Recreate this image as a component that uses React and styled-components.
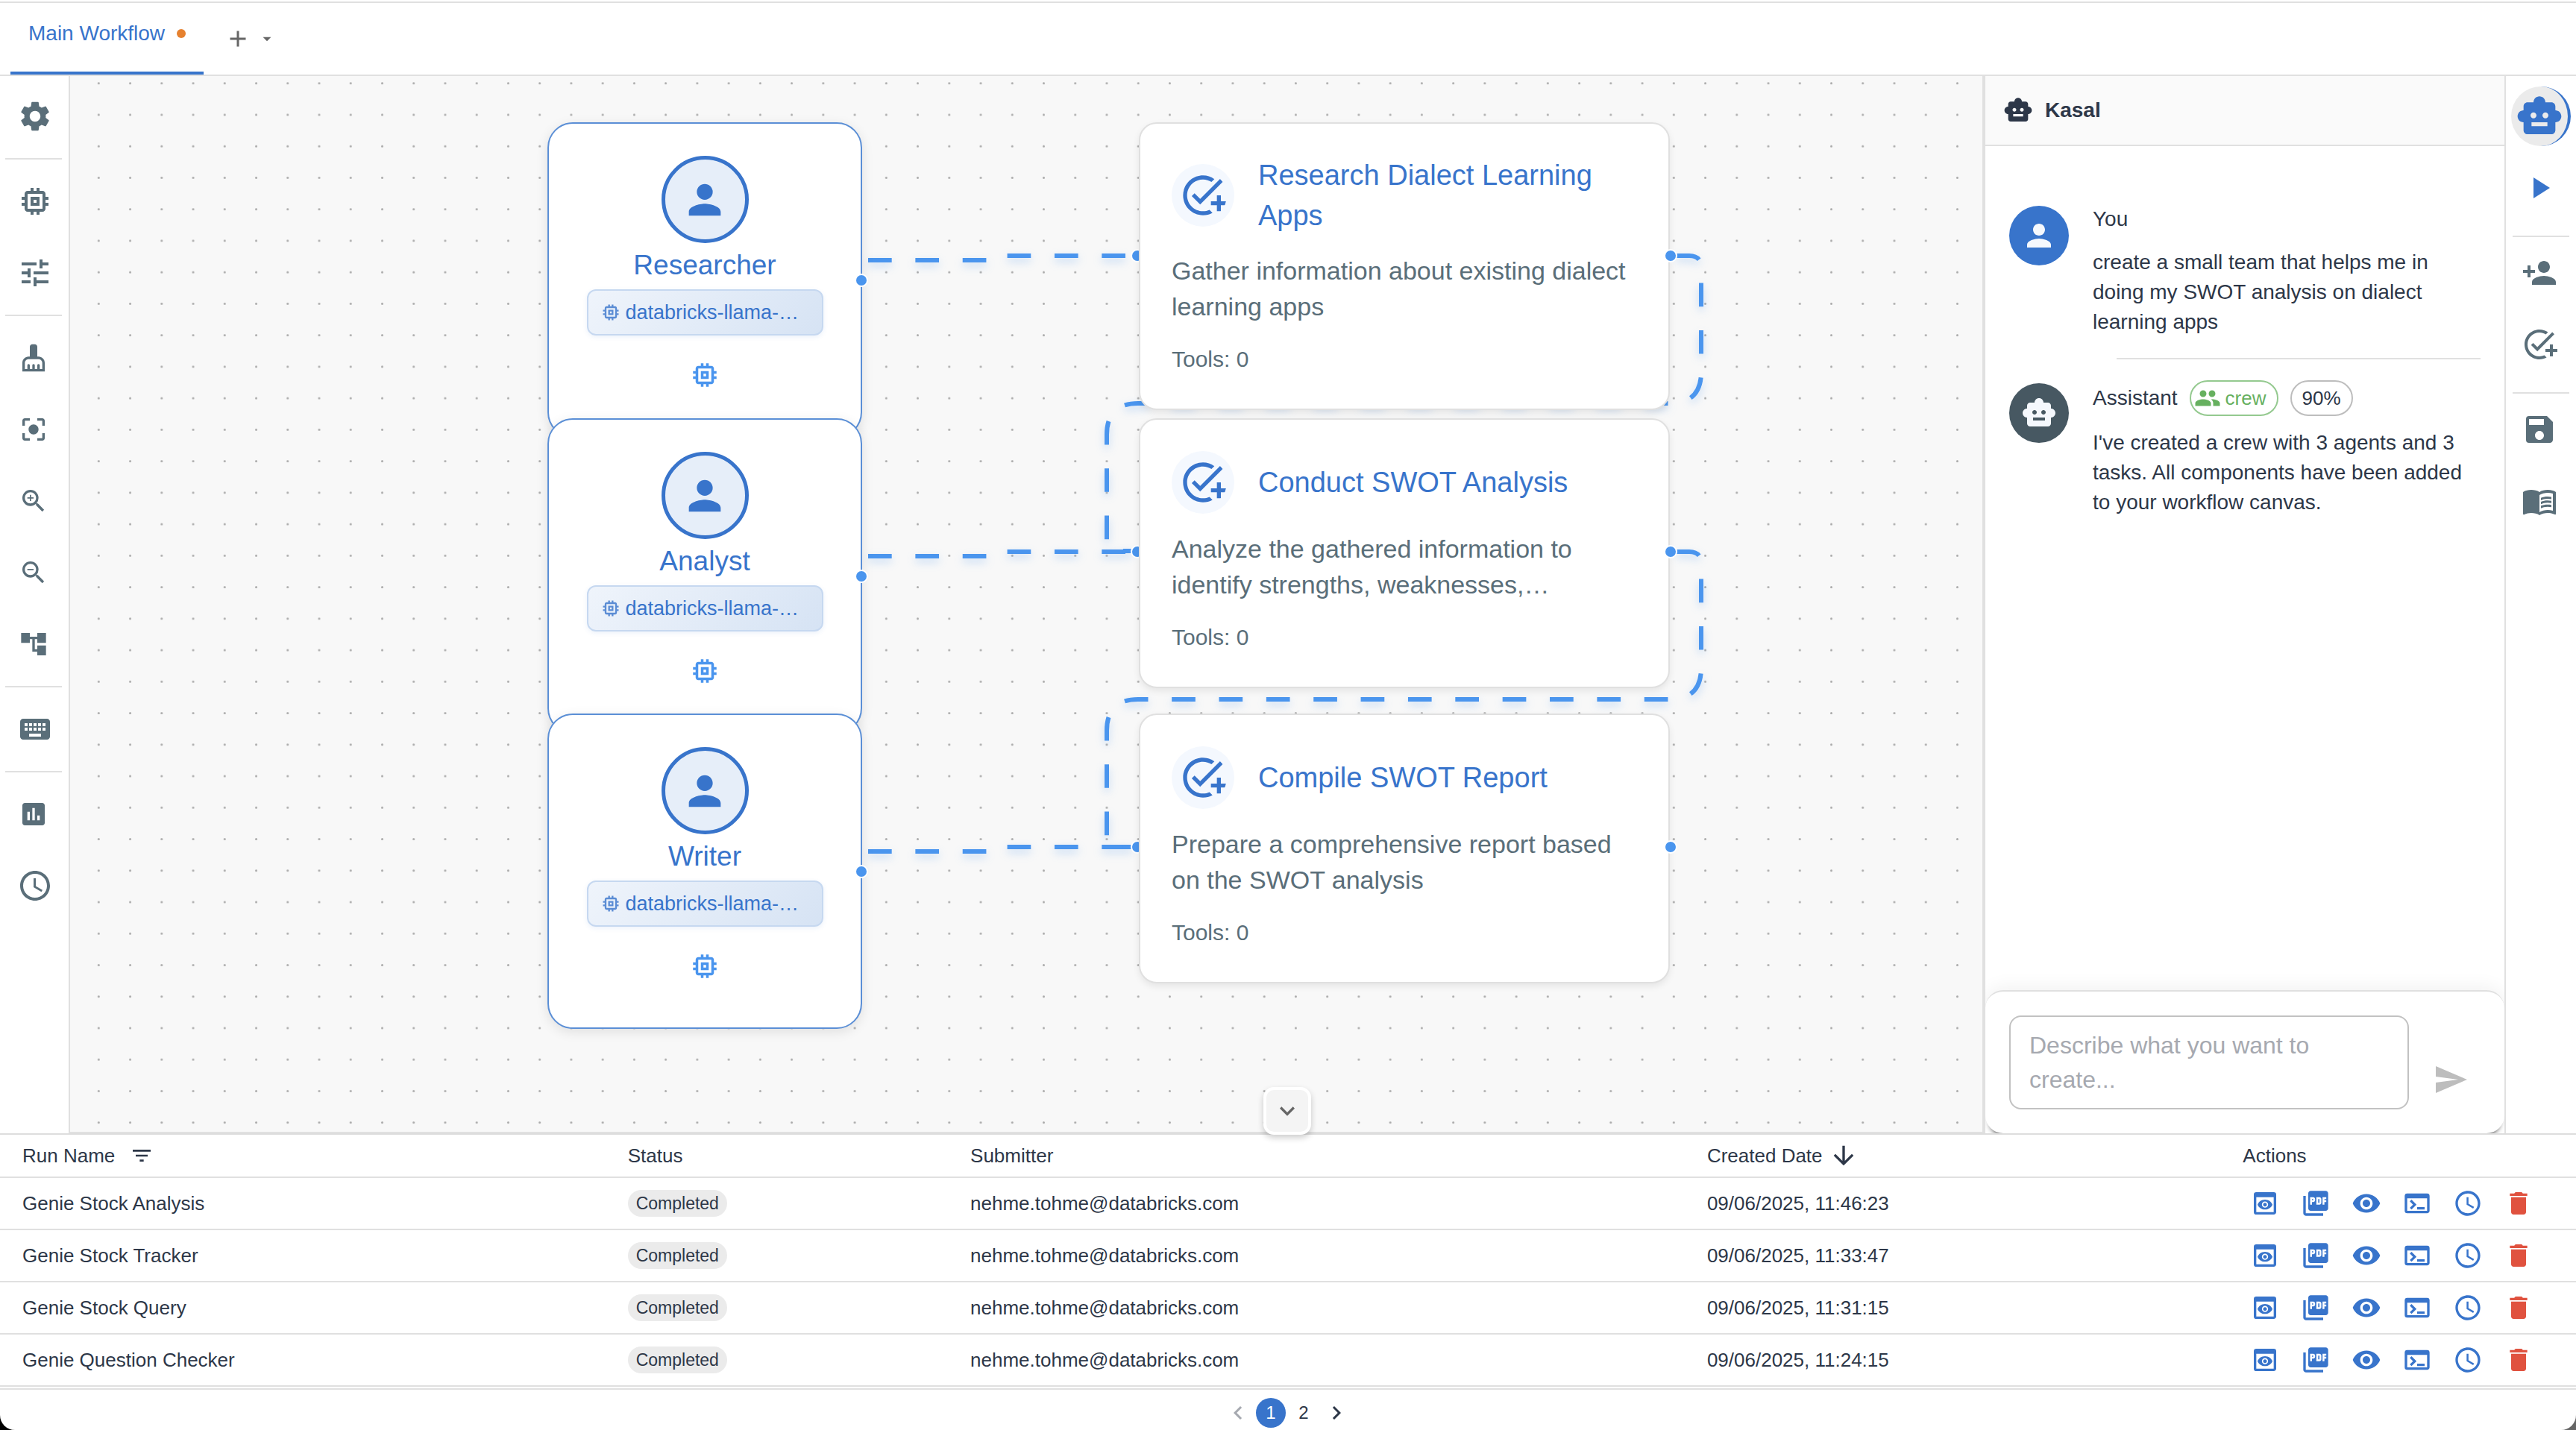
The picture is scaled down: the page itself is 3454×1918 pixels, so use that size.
import React from 'react';
import styled, { createGlobalStyle } from 'styled-components';
import {
  MdAccessTime, MdAccountTree, MdAdd, MdAddTask, MdArrowDownward, MdArrowDropDown,
  MdAssessment, MdCenterFocusStrong, MdCleaningServices, MdDelete, MdFilterList,
  MdGroup, MdKeyboard, MdKeyboardArrowDown, MdMemory, MdMenuBook, MdNavigateBefore,
  MdNavigateNext, MdPerson, MdPersonAdd, MdPictureAsPdf, MdPlayArrow, MdPreview,
  MdSave, MdSend, MdSettings, MdSmartToy, MdTerminal, MdTune, MdVisibility,
  MdZoomIn, MdZoomOut,
} from 'react-icons/md';

const color = {
  primary: '#3874cb',
  bright: '#4a95ee',
  border: '#e0e0e0',
  text: '#2d3748',
  muted: '#5a6e79',
  danger: '#e0523f',
  success: '#66b05f',
};

const GlobalStyle = createGlobalStyle`
  *, *::before, *::after { box-sizing: border-box; }
  body {
    margin: 0;
    background: linear-gradient(90deg, #000, #666);
    color: ${color.text};
    font-family: "Liberation Sans", Arial, Helvetica, sans-serif;
  }
  button {
    padding: 0;
    border: 0;
    background: none;
    color: inherit;
    font: inherit;
    cursor: pointer;
  }
  svg { display: block; flex: none; }
  p, h1, h2, h3 { margin: 0; font-weight: 400; }
`;

const Page = styled.div`
  display: flex;
  flex-direction: column;
  min-height: 100vh;
  padding-top: 2px;
  background: #fff;
  border-radius: 0 0 20px 20px;
  overflow: hidden;
`;

/* ---------- tab bar ---------- */

const TabBar = styled.header`
  display: flex;
  align-items: stretch;
  height: 100px;
  padding-left: 14px;
  border-top: 2px solid ${color.border};
  border-bottom: 2px solid ${color.border};
`;

const Tab = styled.button`
  display: flex;
  align-items: center;
  gap: 16px;
  padding: 0 24px 10px;
  border-bottom: 4px solid ${color.primary};
  color: ${color.primary};
  font-size: 28px;
`;

const UnsavedDot = styled.span`
  width: 12px;
  height: 12px;
  border-radius: 50%;
  background: #e6812f;
`;

const TabTools = styled.div`
  display: flex;
  align-items: center;
  gap: 8px;
  margin-left: 28px;
  color: #666;
`;

/* ---------- workspace ---------- */

const Workspace = styled.div`
  display: flex;
  flex: 1;
`;

const LeftRail = styled.nav`
  display: flex;
  flex-direction: column;
  gap: 16px;
  width: 94px;
  padding: 14px 9px 0 7px;
  border-right: 2px solid ${color.border};
`;

const RightRail = styled(LeftRail)`
  padding: 14px 7px 0;
  border-right: 0;
`;

const RailButton = styled.button`
  display: flex;
  align-items: center;
  justify-content: center;
  flex: none;
  width: ${(p) => (p.$small ? 76 : 80)}px;
  height: 80px;
  color: ${(p) => (p.$accent ? color.primary : color.muted)};
`;

const RightRailButton = styled(RailButton)`
  border-right: 4px solid ${(p) => (p.$selected ? color.primary : 'transparent')};
  border-radius: 50%;
  background: ${(p) => (p.$selected ? '#ebebeb' : 'none')};
`;

const RailDivider = styled.hr`
  width: 76px;
  height: 2px;
  margin: 0;
  border: 0;
  background: ${color.border};
`;

const RightRailDivider = styled(RailDivider)`
  margin: 8px 2px -8px;
`;

/* ---------- canvas ---------- */

const Canvas = styled.main`
  position: relative;
  flex: 1;
  background: #f8f8f8;
  border-bottom: 2px solid ${color.border};
  overflow: hidden;
`;

const Edges = styled.svg`
  position: absolute;
  inset: 0;
  width: 100%;
  height: 100%;
`;

const Edge = styled.path`
  fill: none;
  stroke: ${color.bright};
  stroke-width: 6;
  stroke-dasharray: 31.68;
`;

const EdgeLayer = styled.g`
  filter: drop-shadow(0 5px 6px rgba(74, 149, 238, 0.3));
`;

const Node = styled.article`
  position: absolute;
  left: ${(p) => p.$x}px;
  top: ${(p) => p.$y}px;
  background: #fff;
`;

const AgentNode = styled(Node)`
  display: flex;
  flex-direction: column;
  align-items: center;
  width: 422px;
  height: 423px;
  padding-top: 43px;
  border: 2px solid #5b8fd6;
  border-radius: 34px;
  box-shadow: 0 4px 16px rgba(0, 0, 0, 0.1);
`;

const AgentAvatar = styled.span`
  display: flex;
  align-items: center;
  justify-content: center;
  width: 117px;
  height: 117px;
  border: 5px solid ${color.primary};
  border-radius: 50%;
  background: #e6eef9;
  color: ${color.primary};
`;

const AgentName = styled.h2`
  margin-top: 7px;
  color: ${color.primary};
  font-size: 37px;
  line-height: 46px;
`;

const ModelBadge = styled.span`
  display: flex;
  align-items: center;
  gap: 6px;
  width: 317px;
  height: 62px;
  margin-top: 9px;
  padding-left: 16px;
  border: 2px solid #c6d8f0;
  border-radius: 12px;
  background: linear-gradient(135deg, #eff4fb, #d6e3f4);
  box-shadow: 0 2px 6px rgba(56, 116, 203, 0.1);
  color: ${color.primary};
  font-size: 27px;
  white-space: nowrap;

  svg { opacity: 0.8; }
`;

const MemoryMark = styled.span`
  margin-top: 32px;
  color: ${color.bright};
`;

const TaskNode = styled(Node)`
  display: flex;
  flex-direction: column;
  gap: 23px;
  width: 712px;
  padding: 42px;
  border: 2px solid ${color.border};
  border-radius: 24px;
  box-shadow: 0 4px 10px rgba(0, 0, 0, 0.08);
`;

const TaskHead = styled.div`
  display: flex;
  align-items: center;
  gap: 32px;
  color: ${color.primary};

  svg {
    width: 84px;
    height: 84px;
    padding: 10px;
    border-radius: 50%;
    background: #f4f8fe;
    overflow: hidden;
  }
`;

const TaskTitle = styled.h2`
  font-size: 38px;
  line-height: 54px;
`;

const TaskText = styled.p`
  color: ${color.muted};
  font-size: 34px;
  line-height: 48px;
`;

const TaskTools = styled(TaskText)`
  font-size: 30px;
`;

const Handle = styled.span`
  position: absolute;
  left: ${(p) => p.$x - 9}px;
  top: ${(p) => p.$y - 9}px;
  width: 18px;
  height: 18px;
  border: 2px solid #fff;
  border-radius: 50%;
  background: ${color.bright};
`;

/* ---------- chat ---------- */

const Chat = styled.aside`
  display: flex;
  flex-direction: column;
  width: 702px;
  border-left: 4px solid ${color.border};
  border-right: 2px solid ${color.border};
`;

const ChatHeader = styled.div`
  display: flex;
  align-items: center;
  gap: 16px;
  height: 94px;
  padding-left: 24px;
  border-bottom: 2px solid ${color.border};
  background: #fafafa;
`;

const ChatTitle = styled.h1`
  font-size: 28px;
  font-weight: 700;
`;

const Messages = styled.div`
  flex: 1;
  padding: 48px 32px 0;
`;

const Message = styled.section`
  display: flex;
  align-items: flex-start;
  gap: 32px;
  padding: 28px 0;
`;

const MessageAvatar = styled.span`
  display: flex;
  align-items: center;
  justify-content: center;
  flex: none;
  width: 80px;
  height: 80px;
  margin-top: 4px;
  border-radius: 50%;
  background: ${(p) => (p.$bot ? '#475862' : color.primary)};
  color: #f5f8fd;
`;

const MessageBody = styled.div`
  display: flex;
  flex-direction: column;
  gap: 16px;
  font-size: 28px;
`;

const MessageHead = styled.div`
  display: flex;
  align-items: center;
  gap: 16px;
  line-height: 44px;
`;

const MessageText = styled.p`
  line-height: 40px;
`;

const MessageDivider = styled.hr`
  height: 2px;
  margin: 0 0 0 144px;
  border: 0;
  background: ${color.border};
`;

const Chip = styled.span`
  display: flex;
  align-items: center;
  gap: 6px;
  height: 48px;
  padding: ${(p) => (p.$icon ? '0 14px 0 4px' : '0 14px')};
  border: 2px solid ${(p) => (p.$icon ? '#94c98f' : '#bdbdbd')};
  border-radius: 24px;
  color: ${(p) => (p.$icon ? color.success : color.text)};
  font-size: 26px;
`;

const Composer = styled.form`
  display: flex;
  align-items: flex-end;
  gap: 16px;
  padding: 32px;
  border-top: 2px solid ${color.border};
  border-radius: 24px;
  background: #fff;
  box-shadow: 0 8px 6px -6px rgba(0, 0, 0, 0.7), 0 -4px 24px rgba(0, 0, 0, 0.06);
  clip-path: inset(-40px 0 0 0);
`;

const Prompt = styled.textarea`
  flex: 1;
  min-width: 0;
  height: 126px;
  padding: 15px 25px;
  border: 2px solid #c2c2c2;
  border-radius: 16px;
  background: #fff;
  color: ${color.text};
  font: 32px/46px "Liberation Sans", Arial, Helvetica, sans-serif;
  resize: none;

  &::placeholder {
    color: #a6a9b0;
    opacity: 1;
  }
`;

const SendButton = styled.button`
  display: flex;
  align-items: center;
  justify-content: center;
  width: 80px;
  height: 80px;
  color: #bdbdbd;
`;

/* ---------- run history ---------- */

const History = styled.section`
  position: relative;
  border-top: 2px solid #dddddd;
`;

const CollapseButton = styled.button`
  position: absolute;
  left: 50%;
  bottom: 100%;
  display: flex;
  align-items: center;
  justify-content: center;
  width: 64px;
  height: 64px;
  margin-left: -33px;
  border: 4px solid #fff;
  border-radius: 14px;
  background: #f4f4f4;
  box-shadow: 0 4px 8px rgba(0, 0, 0, 0.2);
  color: #666;
`;

const RunTable = styled.table`
  width: 100%;
  border-collapse: separate;
  border-spacing: 0;
  table-layout: fixed;
  font-size: 26px;
`;

const HeadCell = styled.th`
  width: ${(p) => p.$width};
  height: 58px;
  padding: 0 0 0 30px;
  border-bottom: 2px solid ${color.border};
  font-weight: 400;
  text-align: left;
`;

const HeadContent = styled.span`
  display: flex;
  align-items: center;
  gap: ${(p) => p.$gap || 8}px;
`;

const Cell = styled.td`
  height: 70px;
  padding: 0 0 0 30px;
  border-bottom: 2px solid ${color.border};
`;

const StatusChip = styled.span`
  display: inline-flex;
  align-items: center;
  height: 36px;
  padding: 0 11px;
  border-radius: 18px;
  background: #ebebeb;
  font-size: 23px;
  vertical-align: middle;
`;

const Actions = styled.div`
  display: flex;
  gap: 8px;
`;

const ActionButton = styled.button`
  display: flex;
  align-items: center;
  justify-content: center;
  width: 60px;
  height: 60px;
  color: ${(p) => (p.$danger ? color.danger : color.primary)};
`;

const Pagination = styled.nav`
  display: flex;
  justify-content: center;
  gap: 4px;
  margin-top: 2px;
  padding: 11px 2px 3px 0;
  border-top: 2px solid ${color.border};
`;

const PageButton = styled.button`
  display: flex;
  align-items: center;
  justify-content: center;
  width: 40px;
  height: 40px;
  border-radius: 50%;
  background: ${(p) => (p.$current ? color.primary : 'none')};
  color: ${(p) => (p.$current ? '#fff' : color.text)};
  font-size: 24px;

  &:disabled { color: #a6a9b0; }
`;

/* ---------- data ---------- */

const leftTools = [
  [{ label: 'Configuration', icon: MdSettings }],
  [{ label: 'Models', icon: MdMemory }, { label: 'Tuning', icon: MdTune }],
  [
    { label: 'Clear canvas', icon: MdCleaningServices, small: true },
    { label: 'Fit view', icon: MdCenterFocusStrong, small: true },
    { label: 'Zoom in', icon: MdZoomIn, small: true },
    { label: 'Zoom out', icon: MdZoomOut, small: true },
    { label: 'Arrange nodes', icon: MdAccountTree, small: true },
  ],
  [{ label: 'Keyboard shortcuts', icon: MdKeyboard }],
  [
    { label: 'Logs', icon: MdAssessment, small: true },
    { label: 'Run history', icon: MdAccessTime },
  ],
];

const rightTools = [
  [
    { label: 'Chat', icon: MdSmartToy, size: 64, selected: true, accent: true },
    { label: 'Run', icon: MdPlayArrow, accent: true },
  ],
  [{ label: 'Add agent', icon: MdPersonAdd }, { label: 'Add task', icon: MdAddTask }],
  [{ label: 'Save crew', icon: MdSave }, { label: 'Open crew', icon: MdMenuBook }],
];

const agents = [
  { name: 'Researcher', y: 62 },
  { name: 'Analyst', y: 459 },
  { name: 'Writer', y: 855 },
];

const tasks = [
  { title: 'Research Dialect Learning Apps', text: 'Gather information about existing dialect learning apps', y: 62 },
  { title: 'Conduct SWOT Analysis', text: 'Analyze the gathered information to identify strengths, weaknesses,…', y: 459 },
  { title: 'Compile SWOT Report', text: 'Prepare a comprehensive report based on the SWOT analysis', y: 855 },
];

const AGENT_X = 640;
const TASK_X = 1433;

const agentEdge = (y) =>
  `M1070 ${y + 185} H1244 Q1247 ${y + 185} 1247 ${y + 182} Q1247 ${y + 179} 1250 ${y + 179} H1424`;

const taskEdge = (y) =>
  `M2154 ${y + 179} H2171 Q2187 ${y + 179} 2187 ${y + 195} V${y + 335} ` +
  `Q2187 ${y + 377} 2145 ${y + 377} H1432 Q1390 ${y + 377} 1390 ${y + 419} ` +
  `V${y + 560} Q1390 ${y + 575} 1406 ${y + 575} H1424`;

const runs = [
  { name: 'Genie Stock Analysis', created: '09/06/2025, 11:46:23' },
  { name: 'Genie Stock Tracker', created: '09/06/2025, 11:33:47' },
  { name: 'Genie Stock Query', created: '09/06/2025, 11:31:15' },
  { name: 'Genie Question Checker', created: '09/06/2025, 11:24:15' },
];

const actions = [
  { label: 'View result', icon: MdPreview },
  { label: 'Download PDF', icon: MdPictureAsPdf },
  { label: 'Show details', icon: MdVisibility },
  { label: 'Show logs', icon: MdTerminal },
  { label: 'Schedule', icon: MdAccessTime },
  { label: 'Delete', icon: MdDelete, danger: true },
];

/* ---------- parts ---------- */

function Agent({ name, y }) {
  return (
    <>
      <AgentNode $x={AGENT_X} $y={y}>
        <AgentAvatar><MdPerson size={64} /></AgentAvatar>
        <AgentName>{name}</AgentName>
        <ModelBadge><MdMemory size={28} />databricks-llama-…</ModelBadge>
        <MemoryMark><MdMemory size={42} /></MemoryMark>
      </AgentNode>
      <Handle $x={AGENT_X + 421} $y={y + 212} />
    </>
  );
}

function Task({ title, text, y }) {
  return (
    <>
      <Handle $x={TASK_X - 2} $y={y + 179} />
      <TaskNode $x={TASK_X} $y={y}>
        <TaskHead><MdAddTask /><TaskTitle>{title}</TaskTitle></TaskHead>
        <TaskText>{text}</TaskText>
        <TaskTools>Tools: 0</TaskTools>
      </TaskNode>
      <Handle $x={TASK_X + 713} $y={y + 179} />
    </>
  );
}

function RunRow({ name, created }) {
  return (
    <tr>
      <Cell>{name}</Cell>
      <Cell><StatusChip>Completed</StatusChip></Cell>
      <Cell>nehme.tohme@databricks.com</Cell>
      <Cell>{created}</Cell>
      <Cell>
        <Actions>
          {actions.map(({ label, icon: Icon, danger }) => (
            <ActionButton key={label} type="button" aria-label={label} $danger={danger}>
              <Icon size={40} />
            </ActionButton>
          ))}
        </Actions>
      </Cell>
    </tr>
  );
}

export default function App() {
  return (
    <>
      <GlobalStyle />
      <Page>
        <TabBar>
          <Tab type="button" role="tab" aria-selected="true">Main Workflow<UnsavedDot /></Tab>
          <TabTools>
            <button type="button" aria-label="New tab"><MdAdd size={36} /></button>
            <button type="button" aria-label="Tab options"><MdArrowDropDown size={26} /></button>
          </TabTools>
        </TabBar>

        <Workspace>
          <LeftRail>
            {leftTools.map((group, i) => (
              <React.Fragment key={i}>
                {i > 0 && <RailDivider />}
                {group.map(({ label, icon: Icon, small }) => (
                  <RailButton key={label} type="button" aria-label={label} $small={small}>
                    <Icon size={small ? 40 : 48} />
                  </RailButton>
                ))}
              </React.Fragment>
            ))}
          </LeftRail>

          <Canvas>
            <Edges>
              <defs>
                <pattern id="dots" x="17.2" y="-11.4" width="42.24" height="42.24" patternUnits="userSpaceOnUse">
                  <circle cx="21.12" cy="21.12" r="1.5" fill="#a9a9a9" />
                </pattern>
              </defs>
              <rect width="100%" height="100%" fill="url(#dots)" />
              <EdgeLayer>
                {agents.map((a) => <Edge key={a.name} d={agentEdge(a.y)} />)}
                {tasks.slice(0, 2).map((t) => <Edge key={t.title} d={taskEdge(t.y)} />)}
              </EdgeLayer>
            </Edges>
            {agents.map((a) => <Agent key={a.name} {...a} />)}
            {tasks.map((t) => <Task key={t.title} {...t} />)}
          </Canvas>

          <Chat>
            <ChatHeader>
              <MdSmartToy size={40} />
              <ChatTitle>Kasal</ChatTitle>
            </ChatHeader>
            <Messages>
              <Message>
                <MessageAvatar><MdPerson size={48} /></MessageAvatar>
                <MessageBody>
                  <MessageHead>You</MessageHead>
                  <MessageText>create a small team that helps me in doing my SWOT analysis on dialect learning apps</MessageText>
                </MessageBody>
              </Message>
              <MessageDivider />
              <Message>
                <MessageAvatar $bot><MdSmartToy size={48} /></MessageAvatar>
                <MessageBody>
                  <MessageHead>
                    Assistant
                    <Chip $icon><MdGroup size={36} />crew</Chip>
                    <Chip>90%</Chip>
                  </MessageHead>
                  <MessageText>I've created a crew with 3 agents and 3 tasks. All components have been added to your workflow canvas.</MessageText>
                </MessageBody>
              </Message>
            </Messages>
            <Composer onSubmit={(e) => e.preventDefault()}>
              <Prompt aria-label="Message" placeholder="Describe what you want to create..." />
              <SendButton type="submit" aria-label="Send"><MdSend size={48} /></SendButton>
            </Composer>
          </Chat>

          <RightRail>
            {rightTools.map((group, i) => (
              <React.Fragment key={i}>
                {i > 0 && <RightRailDivider />}
                {group.map(({ label, icon: Icon, size, selected, accent }) => (
                  <RightRailButton key={label} type="button" aria-label={label} $selected={selected} $accent={accent}>
                    <Icon size={size || 48} />
                  </RightRailButton>
                ))}
              </React.Fragment>
            ))}
          </RightRail>
        </Workspace>

        <History>
          <CollapseButton type="button" aria-label="Collapse run history">
            <MdKeyboardArrowDown size={40} />
          </CollapseButton>
          <RunTable>
            <thead>
              <tr>
                <HeadCell $width="23.5%"><HeadContent $gap={20}>Run Name<MdFilterList size={32} /></HeadContent></HeadCell>
                <HeadCell $width="13.3%">Status</HeadCell>
                <HeadCell $width="28.6%">Submitter</HeadCell>
                <HeadCell $width="20.8%"><HeadContent>Created Date<MdArrowDownward size={40} /></HeadContent></HeadCell>
                <HeadCell $width="13.8%">Actions</HeadCell>
              </tr>
            </thead>
            <tbody>
              {runs.map((r) => <RunRow key={r.name} {...r} />)}
            </tbody>
          </RunTable>
          <Pagination aria-label="Run history pages">
            <PageButton type="button" aria-label="Previous page" disabled><MdNavigateBefore size={36} /></PageButton>
            <PageButton type="button" $current aria-current="page">1</PageButton>
            <PageButton type="button">2</PageButton>
            <PageButton type="button" aria-label="Next page"><MdNavigateNext size={36} /></PageButton>
          </Pagination>
        </History>
      </Page>
    </>
  );
}
